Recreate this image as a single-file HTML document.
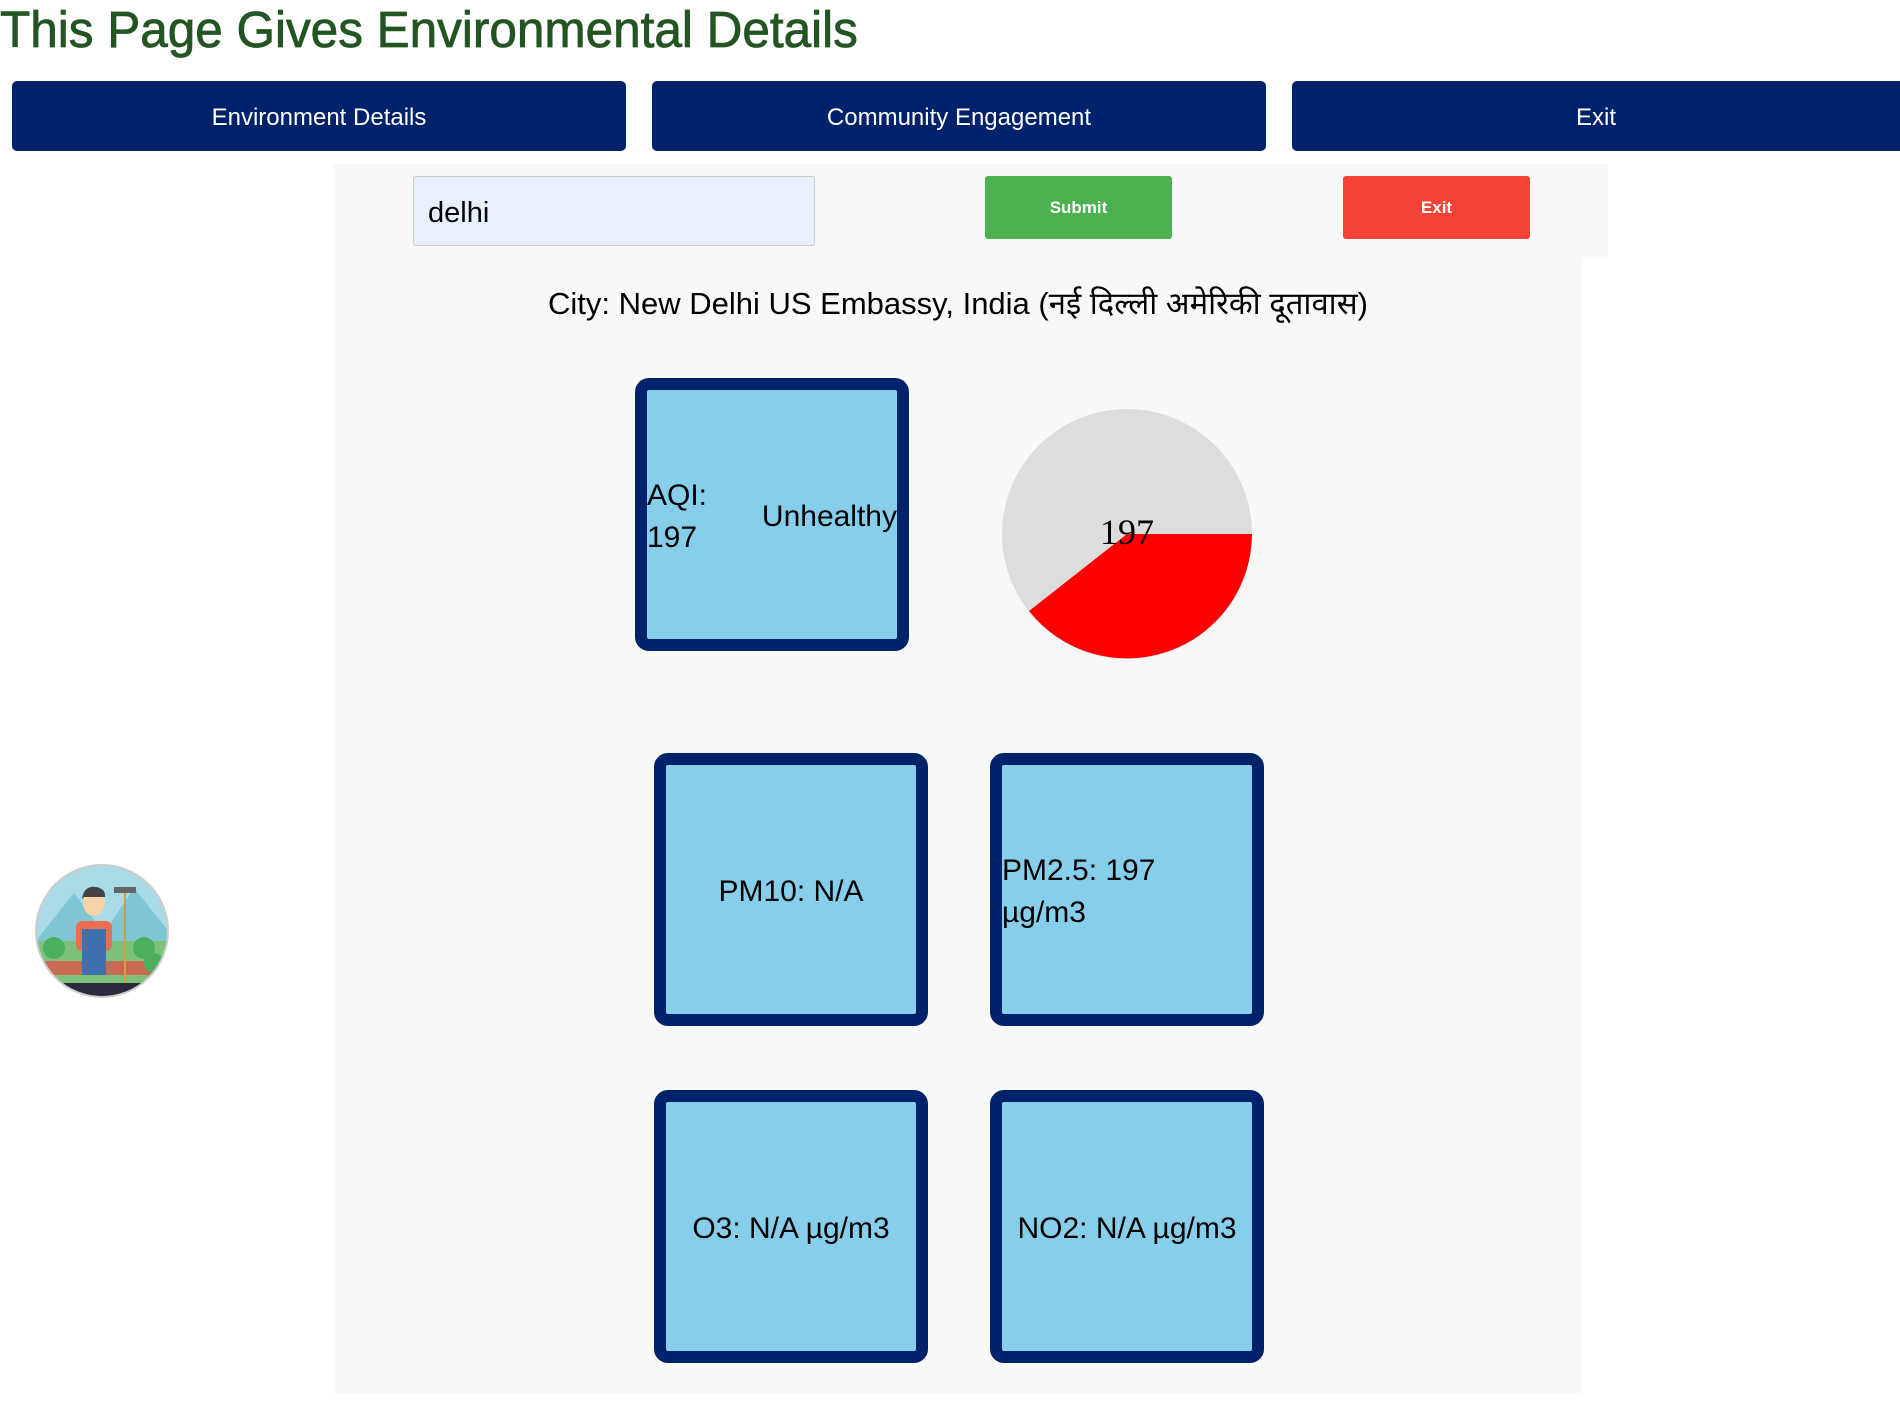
<!DOCTYPE html>
<html><head><meta charset="utf-8"><style>
*{margin:0;padding:0;box-sizing:border-box}
body{width:1900px;height:1423px;background:#fff;position:relative;overflow:hidden;font-family:"Liberation Sans","Noto Sans CJK SC",sans-serif;color:#000}
.abs{position:absolute}
h1{position:absolute;left:0;top:0;font-size:51px;font-weight:normal;color:#225522;-webkit-text-stroke:0.8px #225522;white-space:nowrap;line-height:60px;transform:scaleX(0.97);transform-origin:left}
.nav{position:absolute;top:81px;height:70px;width:614px;background:#00226a;border-radius:5px;color:#fff;font-size:24px;display:flex;align-items:center;justify-content:center;padding-top:4px}
.box{position:absolute;width:274px;height:273px;border:12px solid #00226a;border-radius:14px;background:#87ceeb;font-size:30px;display:flex;align-items:center;justify-content:center;text-align:center;line-height:42px;padding-top:4px}
.btn{position:absolute;top:176px;height:63px;width:187px;border-radius:3px;color:#fff;font-weight:bold;font-size:17px;display:flex;align-items:center;justify-content:center}
</style></head><body>
<h1>This Page Gives Environmental Details</h1>
<div class="nav" style="left:12px">Environment Details</div>
<div class="nav" style="left:652px">Community Engagement</div>
<div class="nav" style="left:1292px;width:640px;padding-right:32px">Exit</div>
<div class="abs" style="left:334px;top:164px;width:1274px;height:94px;background:#f8f8f8"></div>
<div class="abs" style="left:334px;top:258px;width:1248px;height:1135px;background:#f8f8f8"></div>
<div class="abs" style="left:413px;top:176px;width:402px;height:70px;background:#e8f0fe;border:1px solid #ccc;border-radius:3px;font-size:29px;padding-left:14px;line-height:72px">delhi</div>
<div class="btn" style="left:985px;background:#4caf50">Submit</div>
<div class="btn" style="left:1343px;background:#f44336">Exit</div>
<div class="abs" style="left:334px;width:1248px;top:284px;text-align:center;font-size:31px;line-height:40px;font-family:'Liberation Sans','Noto Sans CJK SC','DejaVu Sans',sans-serif">City: New Delhi US Embassy, India (नई दिल्ली अमेरिकी दूतावास)</div>
<div class="box" style="left:635px;top:378px;justify-content:space-between;text-align:left">
<span style="line-height:42px">AQI:<br>197</span><span>Unhealthy</span></div>
<svg class="abs" style="left:1000px;top:407px" width="254" height="254" viewBox="0 0 254 254">
<circle cx="127" cy="127" r="125" fill="#ddd"/>
<path d="M127 127 L252 127 A125 125 0 0 1 29 204 Z" fill="#f00"/>
<text x="127" y="137" text-anchor="middle" font-family="Liberation Serif,serif" font-size="36">197</text>
</svg>
<div class="box" style="left:654px;top:753px">PM10: N/A</div>
<div class="box" style="left:990px;top:753px;justify-content:flex-start;text-align:left">PM2.5: 197<br>µg/m3</div>
<div class="box" style="left:654px;top:1090px">O3: N/A µg/m3</div>
<div class="box" style="left:990px;top:1090px">NO2: N/A µg/m3</div>
<svg class="abs" style="left:34px;top:863px" width="136" height="136" viewBox="0 0 136 136">
<defs><clipPath id="c"><circle cx="68" cy="68" r="66"/></clipPath></defs>
<g clip-path="url(#c)">
<rect width="136" height="136" fill="#a8dbe6"/>
<path d="M0 80 L40 30 L70 70 L100 25 L136 70 V136 H0Z" fill="#7ec6d3"/>
<rect y="78" width="136" height="58" fill="#7dc07a"/>
<rect y="98" width="136" height="14" fill="#c96a55"/>
<rect y="120" width="136" height="16" fill="#2a2a3a"/>
<circle cx="20" cy="85" r="11" fill="#4caf60"/><circle cx="110" cy="85" r="11" fill="#4caf60"/><circle cx="120" cy="100" r="10" fill="#4caf60"/>
<rect x="42" y="58" width="36" height="30" rx="6" fill="#e8704f"/>
<rect x="48" y="66" width="24" height="46" fill="#3f70b0"/>
<ellipse cx="60" cy="40" rx="11" ry="13" fill="#f6d3a8"/>
<path d="M48 36 Q50 22 62 24 Q72 26 71 34 L50 34Z" fill="#444"/>
<rect x="90" y="25" width="2" height="95" fill="#d89a40"/>
<rect x="80" y="24" width="22" height="6" fill="#666"/>
</g>
<circle cx="68" cy="68" r="66" fill="none" stroke="#ccc" stroke-width="2"/>
</svg>
</body></html>
